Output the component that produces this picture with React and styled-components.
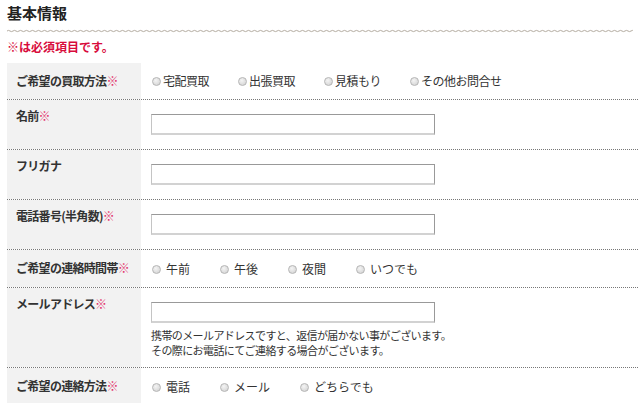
import React from "react"
import styled, { createGlobalStyle } from "styled-components"

const GlobalStyle = createGlobalStyle`
  body {
    margin: 0;
    background: #fff;
    font-family: "Noto Sans CJK JP", "Liberation Sans", sans-serif;
    color: #333;
  }
`

const Page = styled.div`
  padding: 2px 2px 0 7px;
  width: 631px;
`

const Heading = styled.h2`
  margin: 0;
  font-size: 15px;
  line-height: 22px;
  font-weight: 700;
  color: #222;
`

const Wave = styled.svg`
  display: block;
  width: 626px;
  height: 4px;
  margin-top: 5px;
`

const Notice = styled.p`
  margin: 6px 0 0;
  font-size: 12px;
  line-height: 16px;
  font-weight: 700;
  color: #d80c3c;
`

const Table = styled.div`
  margin-top: 8px;
`

const Row = styled.div`
  display: grid;
  grid-template-columns: 134px 1fr;
  border-bottom: 1px dotted #777;
`

const Label = styled.div`
  background: #f2f2f2;
  padding: ${p => (p.$top ? "10px" : "8px")} 2px 8px 9px;
  font-size: 12px;
  line-height: 16px;
  font-weight: 700;
  color: #333;
  letter-spacing: -0.7px;
  white-space: nowrap;
`

const Req = styled.span`
  color: #e2306a;
`

const Field = styled.div`
  padding: ${p => p.$pad || "14px 10px"};
  font-size: 12px;
  line-height: 18px;
`

const TextInput = styled.input`
  display: block;
  box-sizing: border-box;
  width: 284px;
  height: 21px;
  margin: 0;
  border: 1px solid #999;
  border-left-color: #c4c4c4;
  border-bottom: 2px solid #d2d2d2;
  background: #fff;
`

const Options = styled.div`
  display: flex;
  align-items: center;
  padding-left: 1px;
`

const Option = styled.label`
  display: inline-flex;
  align-items: center;
  gap: ${p => p.$gap}px;
  margin-right: ${p => p.$space}px;
  color: #333;
  white-space: nowrap;
  letter-spacing: ${p => p.$tight || 0}px;
`

const Radio = styled.input.attrs({ type: "radio" })`
  appearance: none;
  margin: 0;
  width: 9px;
  height: 9px;
  border-radius: 50%;
  border: 1px solid #b5b5b5;
  box-sizing: border-box;
  background: radial-gradient(circle at 40% 35%, #f4f4f4, #cfcfcf);
`

const Note = styled.p`
  margin: 5px 0 0;
  font-size: 11px;
  line-height: 15px;
  letter-spacing: -0.6px;
  color: #333;
  white-space: nowrap;
`

const RadioGroup = ({ name, items, gap, space, tight }) => (
  <Options>
    {items.map(item => (
      <Option key={item} $gap={gap} $space={space} $tight={tight}>
        <Radio name={name} />
        {item}
      </Option>
    ))}
  </Options>
)

const wavePath = (() => {
  let d = "M0 2"
  for (let x = 0; x < 626; x += 6) {
    d += ` Q${x + 1.5} 0.8 ${x + 3} 2 T${x + 6} 2`
  }
  return d
})()

export default function App() {
  return (
    <Page>
      <GlobalStyle />
      <Heading>基本情報</Heading>
      <Wave viewBox="0 0 626 4" preserveAspectRatio="none">
        <path d={wavePath} fill="none" stroke="#b3aba0" strokeWidth="1" />
      </Wave>
      <Notice>※は必須項目です。</Notice>

      <Table>
        <Row>
          <Label $top>ご希望の買取方法<Req>※</Req></Label>
          <Field $pad="9px 10px 9px 10px">
            <RadioGroup name="method" gap={2} space={29} tight={-0.5} items={["宅配買取", "出張買取", "見積もり", "その他お問合せ"]} />
          </Field>
        </Row>
        <Row>
          <Label>名前<Req>※</Req></Label>
          <Field><TextInput /></Field>
        </Row>
        <Row>
          <Label>フリガナ</Label>
          <Field><TextInput /></Field>
        </Row>
        <Row>
          <Label>電話番号(半角数)<Req>※</Req></Label>
          <Field><TextInput /></Field>
        </Row>
        <Row>
          <Label $top>ご希望の連絡時間帯<Req>※</Req></Label>
          <Field $pad="10px 10px 9px 10px">
            <RadioGroup name="time" gap={5} space={30} items={["午前", "午後", "夜間", "いつでも"]} />
          </Field>
        </Row>
        <Row>
          <Label>メールアドレス<Req>※</Req></Label>
          <Field $pad="14px 10px 9px 10px">
            <TextInput />
            <Note>
              携帯のメールアドレスですと、返信が届かない事がございます。<br />
              その際にお電話にてご連絡する場合がございます。
            </Note>
          </Field>
        </Row>
        <Row>
          <Label $top>ご希望の連絡方法<Req>※</Req></Label>
          <Field $pad="10px 10px 9px 10px">
            <RadioGroup name="contact" gap={5} space={30} items={["電話", "メール", "どちらでも"]} />
          </Field>
        </Row>
      </Table>
    </Page>
  )
}
